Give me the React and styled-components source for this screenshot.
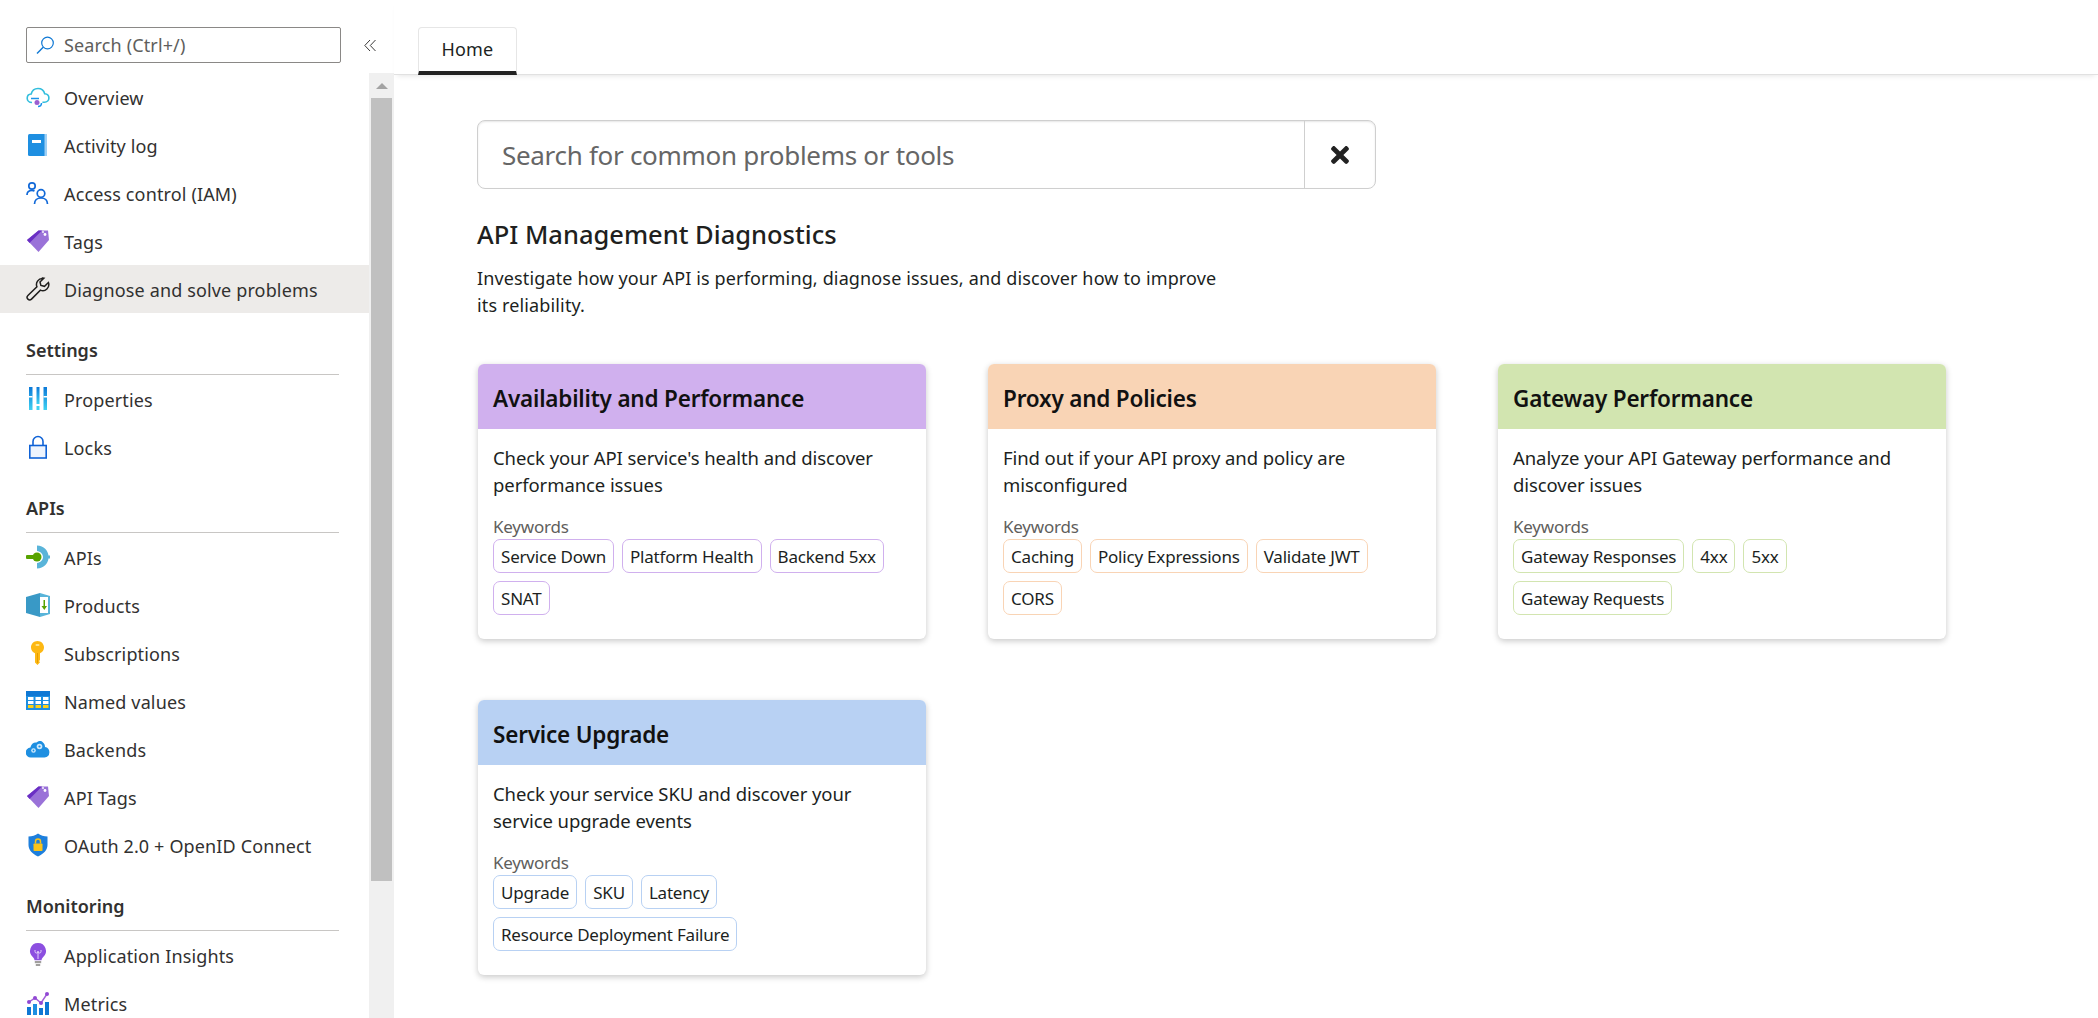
import React from "react";
import styled, { createGlobalStyle } from "styled-components";
import { FaTimes } from "react-icons/fa";

const GlobalStyle = createGlobalStyle`
  html, body {
    margin: 0;
    height: 100%;
    background: #fff;
    font-family: "Noto Sans", "Open Sans", sans-serif;
    color: #323130;
  }
  * { box-sizing: border-box; }
`;

// icons, drawn after the azure portal ones
const OverviewIcon = () => (
  <svg width="24" height="24" viewBox="0 0 24 24" fill="none">
    <path d="M6 17.5C3 17.5 1.2 15.5 1.2 13.2c0-2.4 1.8-4.1 4-4.2C6 5.6 8.7 3.5 12 3.5c3.5 0 6 2.3 6.7 5.3 2.4 .2 4.2 2 4.2 4.2 0 2.3-1.8 4.2-4.5 4.2h-2" stroke="#32bedd" strokeWidth="1.6" />
    <path d="M5 13.5h8M12 21.5c2 0 3.5-1.5 3.500-3.5" stroke="#1b93eb" strokeWidth="1.5" />
    <circle cx="11" cy="17.5" r="2.5" fill="#9b5fd0" />
  </svg>
);
const LogIcon = () => (
  <svg width="24" height="24" viewBox="0 0 24 24">
    <rect x="2" y="1" width="19" height="22" rx="1.5" fill="#1e8fe1" />
    <rect x="18.5" y="1" width="2.5" height="22" fill="#9ed0f5" />
    <rect x="6" y="7" width="9" height="3" fill="#fff" />
  </svg>
);
const PeopleIcon = () => (
  <svg width="24" height="24" viewBox="0 0 24 24" fill="none" stroke="#1269d8" strokeWidth="1.7">
    <circle cx="6" cy="5" r="3.2" />
    <path d="M1 14c0-3 2-4.500 5-4.500 1 0 2 .2 2.500.6" />
    <circle cx="15" cy="12.5" r="3.8" />
    <path d="M8.500 23c0-3.500 2.500-6 6.500-6s6.500 2.500 6.500 6" />
  </svg>
);
const TagIcon = () => (
  <svg width="24" height="24" viewBox="0 0 24 24">
    <path d="M1 11 12.500 1.500 22 1.500l1 9.500L12.500 23z" fill="#9a72d8" />
    <path d="M1 11 12.500 1.500 16 1.500 3.500 14z" fill="#6a2fc4" />
    <circle cx="19" cy="5.5" r="1.4" fill="#fff" />
    <circle cx="17" cy="3" r=".9" fill="#fff" />
  </svg>
);
const WrenchIcon = () => (
  <svg width="24" height="24" viewBox="0 0 24 24" fill="none" stroke="#201f1e" strokeWidth="1.5">
    <path d="M16.500 1.500a6 6 0 0 0-5.600 8.200L1.900 18.500a2.500 2.500 0 0 0 3.600 3.600l8.900-9a6 6 0 0 0 8-7.600l-3.900 3.800-3.600-.9-.9-3.500 3.900-3.700a6 6 0 0 0-1.400-.2z" />
  </svg>
);
const PropertiesIcon = () => (
  <svg width="24" height="24" viewBox="0 0 24 24">
    <defs>
      <linearGradient id="propGrad" x1="0" y1="0" x2="0" y2="1">
        <stop offset="0" stopColor="#0b78d8" />
        <stop offset="1" stopColor="#3fd2f2" />
      </linearGradient>
    </defs>
    <rect x="3" y="0" width="3.5" height="23" fill="url(#propGrad)" />
    <rect x="10.5" y="0" width="3" height="17" fill="url(#propGrad)" />
    <rect x="10.5" y="19" width="3" height="4" fill="#3fd2f2" />
    <rect x="17.5" y="0" width="3.5" height="23" fill="url(#propGrad)" />
    <rect x="3" y="9" width="3.5" height="1.5" fill="#fff" />
    <rect x="17.5" y="9" width="3.5" height="1.5" fill="#fff" />
  </svg>
);
const LockIcon = () => (
  <svg width="24" height="24" viewBox="0 0 24 24" fill="none" stroke="#0f62d6" strokeWidth="1.6">
    <rect x="3.8" y="10.5" width="16.4" height="12.5" fill="#eef4fd" />
    <path d="M7 10.500V6.500a5 5 0 0 1 10 0v4" />
  </svg>
);
const ApiIcon = () => (
  <svg width="24" height="24" viewBox="0 0 24 24">
    <path d="M11 .5C18 1 22 5.500 22.500 10.500H24v3h-1.500C22 18.500 18 23 11 23.500V18c3.500-.5 6-3 6-6s-2.500-5.500-6-6z" fill="#59b4d9" />
    <circle cx="11" cy="12" r="4.5" fill="#57a300" />
    <rect x="0" y="10" width="8" height="4" rx="1" fill="#57a300" />
  </svg>
);
const ProductIcon = () => (
  <svg width="24" height="24" viewBox="0 0 24 24">
    <path d="M0 4 14 0v24L0 20z" fill="#3999c6" />
    <path d="M14 0l10 3v18l-10 3z" fill="#59b4d9" />
    <rect x="14" y="4" width="8" height="16" fill="#fff" />
    <path d="M17.500 7h1.500v6h2l-2.700 4-2.800-4h2z" fill="#57a300" />
  </svg>
);
const KeyIcon = () => (
  <svg width="24" height="24" viewBox="0 0 24 24">
    <path d="M11.500 0c3.600 0 6.500 2.800 6.500 6.400 0 2.600-1.500 4.800-4 5.800V19l-1 1 1 1.200-2.500 2.800L9 21.500V12.200c-2.500-1-4-3.200-4-5.800C5 2.800 7.900 0 11.500 0z" fill="#fdb813" />
    <rect x="9.500" y="3" width="4" height="2" rx="1" fill="#ffe28a" />
    <rect x="11" y="12" width="1" height="10" fill="#e59c00" />
  </svg>
);
const TableIcon = () => (
  <svg width="24" height="24" viewBox="0 0 24 24">
    <rect x="0" y="2" width="24" height="19" fill="#1e8fe1" />
    <rect x="0" y="2" width="24" height="5" fill="#0f78d4" />
    {[8, 12, 16].map((y) =>
      [2, 9.5, 17].map((x) => (
        <rect key={`${x}-${y}`} x={x} y={y} width="5.5" height="3" fill={y === 16 ? "#fcd116" : "#fff"} />
      ))
    )}
  </svg>
);
const BackendIcon = () => (
  <svg width="24" height="24" viewBox="0 0 24 24">
    <path d="M5 20.500a5 5 0 0 1-.6-10C5 7 8 5 10.500 5.500 12 4 15 3 17 5.500c1.500 1 2 3 2 4.500a5.300 5.300 0 0 1-.5 10.500z" fill="#1e8fe1" />
    <circle cx="7.5" cy="13.5" r="2.3" fill="#cfe9fb" />
    <circle cx="13.5" cy="9.5" r="2.8" fill="#cfe9fb" />
    <circle cx="7.5" cy="13.5" r=".9" fill="#1e8fe1" />
    <circle cx="13.5" cy="9.5" r="1.1" fill="#1e8fe1" />
  </svg>
);
const ShieldIcon = () => (
  <svg width="24" height="24" viewBox="0 0 24 24">
    <path d="M2.500 3.500C6 3.500 9.500 2.500 12 .5c2.500 2 6 3 9.500 3v8.500c0 5-4 9-9.500 11.500C6.500 21 2.500 17 2.500 12z" fill="#1e7fdc" />
    <rect x="7.5" y="10.5" width="9" height="7.5" rx=".8" fill="#fcc419" />
    <path d="M9.500 10.500V8.500a2.500 2.500 0 0 1 5 0v2" fill="none" stroke="#fcc419" strokeWidth="1.5" />
  </svg>
);
const BulbIcon = () => (
  <svg width="24" height="24" viewBox="0 0 24 24">
    <path d="M12 0a8 8 0 0 1 5 14.200c-1 1-1.500 2-1.500 3H8.500c0-1-.5-2-1.500-3A8 8 0 0 1 12 0z" fill="#8c4fe0" />
    <rect x="8.8" y="18" width="6.4" height="2.2" fill="#a19f9d" />
    <rect x="9.8" y="21" width="4.4" height="2" fill="#a19f9d" />
    <path d="M9 7v1.500a1.500 1.500 0 0 0 3 0 1.500 1.500 0 0 0 3 0V7M12 8v8" stroke="#e3d2fa" strokeWidth="1" fill="none" />
  </svg>
);
const MetricsIcon = () => (
  <svg width="24" height="24" viewBox="0 0 24 24">
    <rect x="1" y="16" width="4" height="8" fill="#0f78d4" />
    <rect x="7" y="13" width="4" height="11" fill="#1e8fe1" />
    <rect x="13" y="17" width="4" height="7" fill="#0f78d4" />
    <rect x="19" y="11" width="4" height="13" fill="#0f78d4" />
    <path d="M3 11l6-4 6 5 6-9" stroke="#a35fd8" strokeWidth="1.5" fill="none" />
    {[[3, 11], [9, 7], [15, 12], [21, 3]].map(([cx, cy]) => (
      <circle key={cx} cx={cx} cy={cy} r="2" fill="#9148d4" />
    ))}
  </svg>
);
const MagnifierIcon = () => (
  <svg width="19" height="19" viewBox="0 0 19 19" fill="none">
    <circle cx="11.5" cy="7" r="5.8" stroke="#0f78d4" strokeWidth="1.2" />
    <path d="M7.200 11.200 1 17.500" stroke="#0f78d4" strokeWidth="1.4" />
  </svg>
);
const CollapseIcon = () => (
  <svg width="12" height="13" viewBox="0 0 12 13" fill="none" stroke="#3b3a39" strokeWidth="1">
    <path d="M6 1 .8 6.500 6 12M11.500 1 6.300 6.500 11.500 12" />
  </svg>
);

const navTop = [
  { label: "Overview", icon: <OverviewIcon /> },
  { label: "Activity log", icon: <LogIcon /> },
  { label: "Access control (IAM)", icon: <PeopleIcon /> },
  { label: "Tags", icon: <TagIcon /> },
  { label: "Diagnose and solve problems", icon: <WrenchIcon />, active: true },
];

const navSections = [
  {
    title: "Settings",
    items: [
      { label: "Properties", icon: <PropertiesIcon /> },
      { label: "Locks", icon: <LockIcon /> },
    ],
  },
  {
    title: "APIs",
    items: [
      { label: "APIs", icon: <ApiIcon /> },
      { label: "Products", icon: <ProductIcon /> },
      { label: "Subscriptions", icon: <KeyIcon /> },
      { label: "Named values", icon: <TableIcon /> },
      { label: "Backends", icon: <BackendIcon /> },
      { label: "API Tags", icon: <TagIcon /> },
      { label: "OAuth 2.0 + OpenID Connect", icon: <ShieldIcon /> },
    ],
  },
  {
    title: "Monitoring",
    items: [
      { label: "Application Insights", icon: <BulbIcon /> },
      { label: "Metrics", icon: <MetricsIcon /> },
    ],
  },
];

const cards = [
  {
    title: "Availability and Performance",
    color: "#d0b0ee",
    text: "Check your API service's health and discover performance issues",
    tags: ["Service Down", "Platform Health", "Backend 5xx", "SNAT"],
  },
  {
    title: "Proxy and Policies",
    color: "#f9d4b5",
    text: "Find out if your API proxy and policy are misconfigured",
    tags: ["Caching", "Policy Expressions", "Validate JWT", "CORS"],
  },
  {
    title: "Gateway Performance",
    color: "#d2e5b0",
    text: "Analyze your API Gateway performance and discover issues",
    tags: ["Gateway Responses", "4xx", "5xx", "Gateway Requests"],
  },
  {
    title: "Service Upgrade",
    color: "#b8d1f3",
    text: "Check your service SKU and discover your service upgrade events",
    tags: ["Upgrade", "SKU", "Latency", "Resource Deployment Failure"],
  },
];

function NavRow({ item }) {
  return (
    <Row $active={item.active}>
      <IconSlot>{item.icon}</IconSlot>
      {item.label}
    </Row>
  );
}

export default function App() {
  return (
    <>
      <GlobalStyle />
      <Page>
        <Sidebar>
          <SearchRow>
            <SideSearch>
              <MagnifierIcon />
              Search (Ctrl+/)
            </SideSearch>
            <CollapseButton><CollapseIcon /></CollapseButton>
          </SearchRow>
          <SideBody>
            <Nav>
              {navTop.map((item) => <NavRow key={item.label} item={item} />)}
              {navSections.map((section) => (
                <section key={section.title}>
                  <SectionTitle>{section.title}</SectionTitle>
                  {section.items.map((item) => <NavRow key={item.label} item={item} />)}
                </section>
              ))}
            </Nav>
            <Scrollbar>
              <ScrollArrow />
              <ScrollThumb />
            </Scrollbar>
          </SideBody>
        </Sidebar>
        <Main>
          <TabStrip>
            <Tab>Home</Tab>
          </TabStrip>
          <Content>
            <SearchBox>
              <SearchText>Search for common problems or tools</SearchText>
              <ClearButton><FaTimes size={26} /></ClearButton>
            </SearchBox>
            <Title>API Management Diagnostics</Title>
            <Description>
              Investigate how your API is performing, diagnose issues, and discover how to improve its reliability.
            </Description>
            <CardGrid>
              {cards.map((card) => (
                <Card key={card.title}>
                  <CardHeader $color={card.color}>{card.title}</CardHeader>
                  <CardBody>
                    <CardText>{card.text}</CardText>
                    <KeywordsLabel>Keywords</KeywordsLabel>
                    <Chips>
                      {card.tags.map((tag) => (
                        <Chip key={tag} $color={card.color}>{tag}</Chip>
                      ))}
                    </Chips>
                  </CardBody>
                </Card>
              ))}
            </CardGrid>
          </Content>
        </Main>
      </Page>
    </>
  );
}

const Page = styled.div`
  display: flex;
  height: 100vh;
  overflow: hidden;
`;

const Sidebar = styled.aside`
  width: 394px;
  flex-shrink: 0;
  display: flex;
  flex-direction: column;
`;

const SearchRow = styled.div`
  height: 73px;
  flex-shrink: 0;
  padding: 27px 0 0 26px;
  display: flex;
  align-items: flex-start;
`;

const SideSearch = styled.div`
  width: 315px;
  height: 36px;
  flex-shrink: 0;
  border: 1px solid #8a8886;
  border-radius: 2px;
  padding-left: 9px;
  display: flex;
  align-items: center;
  gap: 9px;
  font-size: 18px;
  letter-spacing: 0.14px;
  color: #605e5c;
`;

const CollapseButton = styled.div`
  width: 53px;
  height: 36px;
  flex-shrink: 0;
  padding-left: 5px;
  display: flex;
  align-items: center;
  justify-content: center;
`;

const SideBody = styled.div`
  flex: 1;
  min-height: 0;
  display: flex;
`;

const Nav = styled.nav`
  width: 369px;
  flex-shrink: 0;
  overflow: hidden;
`;

const Row = styled.div`
  height: 48px;
  padding: 2px 0 0 26px;
  display: flex;
  align-items: center;
  font-size: 18px;
  letter-spacing: 0.14px;
  white-space: nowrap;
  color: #323130;
  background: ${(p) => (p.$active ? "#edebe9" : "transparent")};
`;

const IconSlot = styled.span`
  width: 38px;
  flex-shrink: 0;
  margin-top: -2px;
  display: flex;
  align-items: center;
`;

const SectionTitle = styled.h3`
  height: 62px;
  margin: 0 30px 0 26px;
  padding-bottom: 12px;
  display: flex;
  align-items: flex-end;
  border-bottom: 1px solid #c8c6c4;
  font-size: 18px;
  font-weight: 600;
  letter-spacing: 0;
  color: #323130;
`;

const Scrollbar = styled.div`
  width: 25px;
  flex-shrink: 0;
  background: #f0f0f0;
  display: flex;
  flex-direction: column;
  align-items: center;
`;

const ScrollArrow = styled.div`
  height: 25px;
  width: 100%;
  display: flex;
  align-items: center;
  justify-content: center;
  &::before {
    content: "";
    border-left: 6px solid transparent;
    border-right: 6px solid transparent;
    border-bottom: 6px solid #a3a3a3;
  }
`;

const ScrollThumb = styled.div`
  width: 21px;
  height: 783px;
  background: #c0c0c0;
`;

const Main = styled.main`
  flex: 1;
  min-width: 0;
  display: flex;
  flex-direction: column;
`;

const TabStrip = styled.div`
  height: 75px;
  flex-shrink: 0;
  padding: 27px 0 0 24px;
  border-bottom: 1px solid #e1e1e1;
  box-shadow: 0 4px 5px -3px rgba(0, 0, 0, 0.1);
`;

const Tab = styled.div`
  width: 99px;
  height: 48px;
  padding-bottom: 2px;
  border: 1px solid #e6e6e6;
  border-bottom: 4px solid #222;
  border-radius: 4px 4px 0 0;
  display: flex;
  align-items: center;
  justify-content: center;
  font-size: 18px;
  letter-spacing: 0.14px;
  color: #201f1e;
`;

const Content = styled.div`
  flex: 1;
  padding: 45px 0 0 83px;
`;

const SearchBox = styled.div`
  width: 899px;
  height: 69px;
  display: flex;
  border: 1px solid #cfcfcf;
  border-radius: 8px;
  box-shadow: inset 0 1px 2px rgba(0, 0, 0, 0.1);
`;

const SearchText = styled.div`
  flex: 1;
  padding-left: 24px;
  display: flex;
  align-items: center;
  font-size: 26px;
  letter-spacing: -0.3px;
  color: #666;
`;

const ClearButton = styled.div`
  width: 71px;
  border-left: 1px solid #cfcfcf;
  display: flex;
  align-items: center;
  justify-content: center;
  color: #222;
`;

const Title = styled.h1`
  margin: 28px 0 0;
  font-size: 25.5px;
  line-height: 34px;
  font-weight: 500;
  color: #201f1e;
`;

const Description = styled.p`
  width: 745px;
  margin: 14px 0 0;
  font-size: 18px;
  line-height: 27px;
  letter-spacing: 0.14px;
  color: #201f1e;
`;

const CardGrid = styled.div`
  margin: 45px 0 0 1px;
  display: grid;
  grid-template-columns: repeat(3, 448px);
  column-gap: 62px;
  row-gap: 61px;
`;

const Card = styled.article`
  height: 275px;
  border-radius: 6px;
  background: #fff;
  overflow: hidden;
  box-shadow: 0 2px 6px rgba(0, 0, 0, 0.22);
`;

const CardHeader = styled.h2`
  height: 65px;
  margin: 0;
  padding: 3px 15px 0;
  display: flex;
  align-items: center;
  font-size: 22.5px;
  font-weight: 600;
  letter-spacing: -0.2px;
  color: #111;
  background: ${(p) => p.$color};
`;

const CardBody = styled.div`
  padding: 15px 15px 0;
`;

const CardText = styled.p`
  margin: 0;
  font-size: 18.5px;
  line-height: 27px;
  letter-spacing: -0.08px;
  color: #201f1e;
`;

const KeywordsLabel = styled.div`
  margin-top: 17px;
  font-size: 17px;
  line-height: 24px;
  letter-spacing: -0.2px;
  color: #605e5c;
`;

const Chips = styled.div`
  display: flex;
  flex-wrap: wrap;
  gap: 8px;
`;

const Chip = styled.span`
  height: 34px;
  padding: 0 7px;
  display: flex;
  align-items: center;
  border: 1px solid ${(p) => p.$color};
  border-radius: 7px;
  font-size: 17px;
  letter-spacing: -0.2px;
  color: #201f1e;
`;
